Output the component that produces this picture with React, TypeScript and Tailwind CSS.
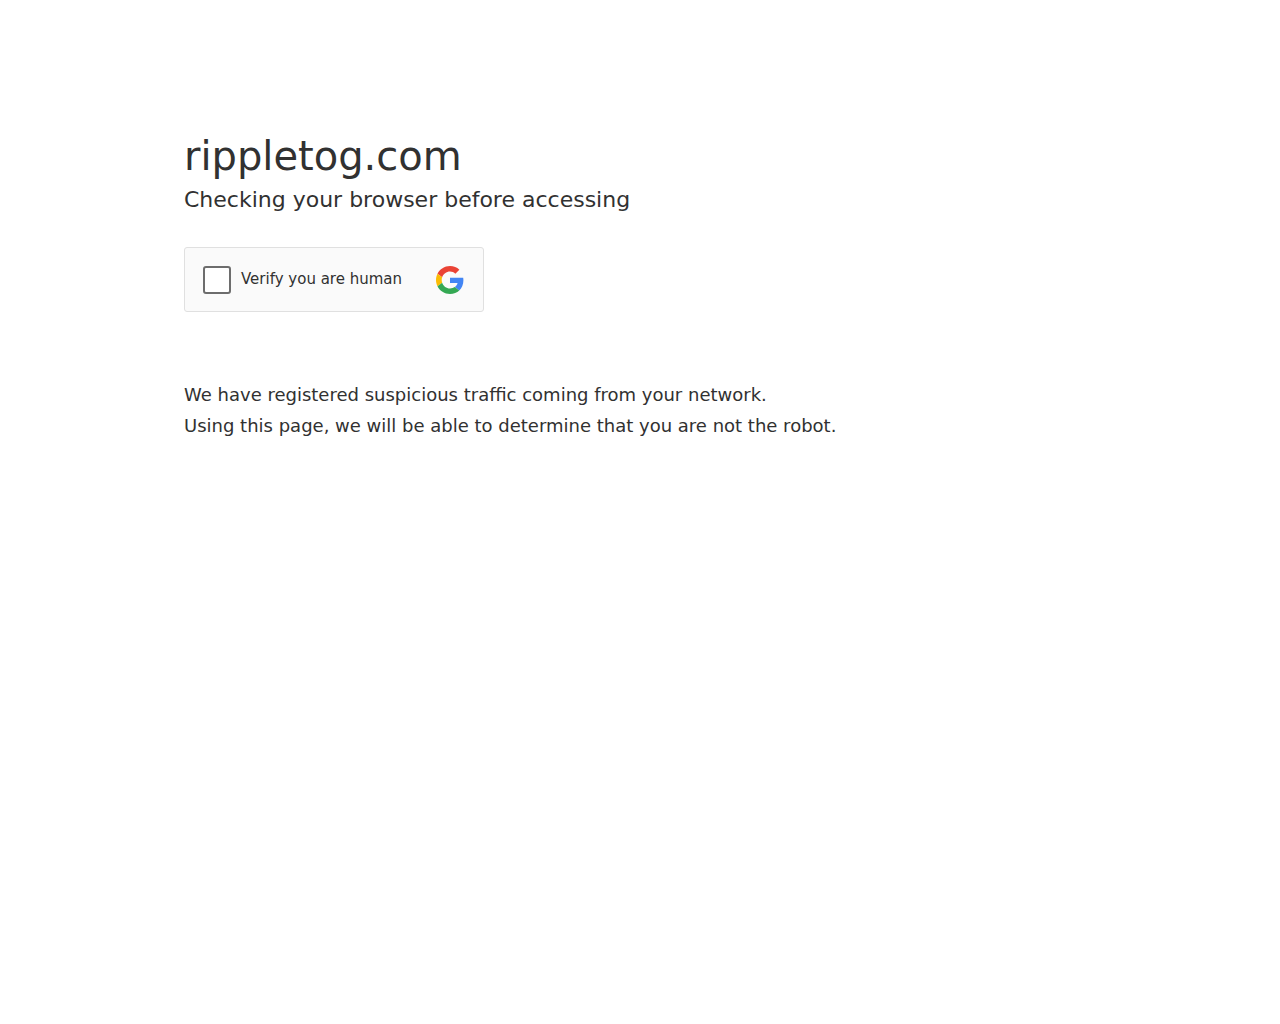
import { useState } from 'react';

const notes = [
  'We have registered suspicious traffic coming from your network.',
  'Using this page, we will be able to determine that you are not the robot.',
];

function GoogleLogo() {
  return (
    <svg viewBox="0 0 48 48" className="size-7" role="img" aria-label="Google">
      <path fill="#EA4335" d="M24 9.5c3.54 0 6.71 1.22 9.21 3.6l6.85-6.85C35.9 2.38 30.47 0 24 0 14.62 0 6.51 5.38 2.56 13.22l7.98 6.19C12.43 13.72 17.74 9.5 24 9.5z" />
      <path fill="#4285F4" d="M46.98 24.55c0-1.57-.15-3.09-.38-4.55H24v9.02h12.94c-.58 2.96-2.26 5.48-4.78 7.18l7.73 6c4.51-4.18 7.09-10.36 7.09-17.65z" />
      <path fill="#FBBC05" d="M10.53 28.59c-.48-1.45-.76-2.99-.76-4.59s.27-3.14.76-4.59l-7.98-6.19C.92 16.46 0 20.12 0 24c0 3.88.92 7.54 2.56 10.78l7.97-6.19z" />
      <path fill="#34A853" d="M24 48c6.48 0 11.93-2.13 15.89-5.81l-7.73-6c-2.15 1.45-4.92 2.3-8.16 2.3-6.26 0-11.57-4.22-13.47-9.91l-7.98 6.19C6.51 42.62 14.62 48 24 48z" />
    </svg>
  );
}

export default function App() {
  const [checked, setChecked] = useState(false);

  return (
    <main className="mx-auto w-full max-w-[960px] px-6 pt-32 font-['DejaVu_Sans',sans-serif] text-[#313131]">
      <h1 className="text-[40px] leading-[56px]">rippletog.com</h1>
      <h2 className="text-[22px] leading-[31px]">Checking your browser before accessing</h2>

      <div className="mt-8 flex h-[65px] w-full max-w-[300px] items-center justify-between rounded-[3px] border border-[#e0e0e0] bg-[#fafafa] pr-[19px] pl-[18px]">
        <label className="flex cursor-pointer items-center gap-2.5 text-[15px] leading-[31px]">
          <input
            type="checkbox"
            checked={checked}
            onChange={(e) => setChecked(e.target.checked)}
            className="size-7 appearance-none rounded-[3px] border-2 border-[#6d6d6d] bg-white checked:bg-[#6d6d6d]"
          />
          Verify you are human
        </label>
        <GoogleLogo />
      </div>

      <div className="mt-[67px] text-[18px] leading-[31px]">
        {notes.map((note) => (
          <p key={note}>{note}</p>
        ))}
      </div>
    </main>
  );
}
